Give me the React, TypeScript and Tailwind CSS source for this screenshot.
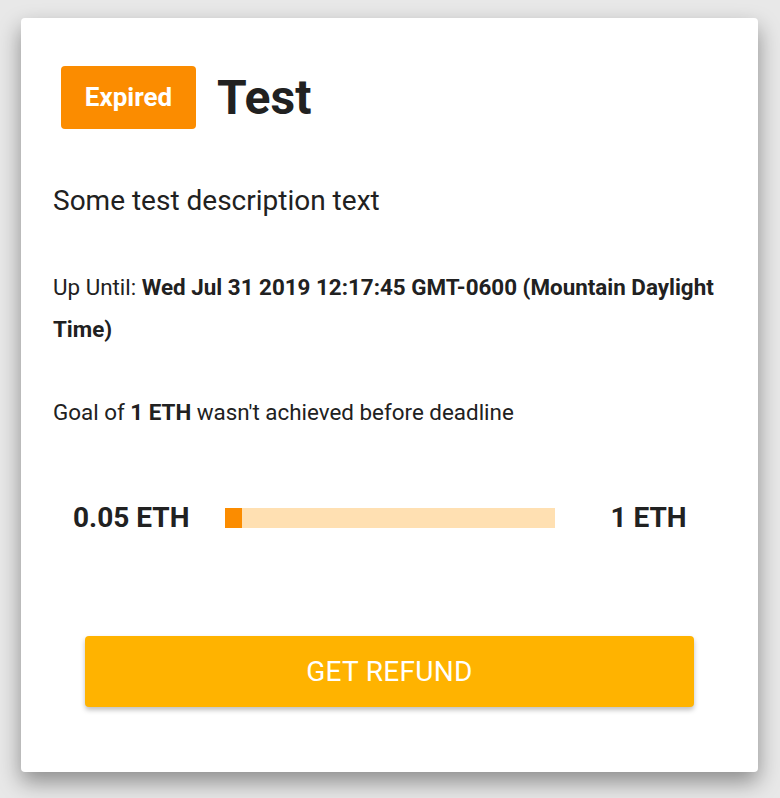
import React from 'react';

const Amount = ({ children }: { children: React.ReactNode }) => (
    <span className="text-[28px] font-bold text-[#212121] leading-8">{children}</span>
);

export default function App() {
    const raised = 0.05;
    const goal = 1;
    const pct = Math.min(100, (raised / goal) * 100);

    return (
        <div className="min-h-[798px] w-[780px] bg-[#e8e8e8] pt-[18px] pl-[21px] font-['Roboto',sans-serif] text-[#212121]">
            <div className="w-[737px] h-[754px] bg-white rounded-[4px] shadow-[0_10px_22px_rgba(0,0,0,0.4)] px-8 pt-12">
                <div className="flex items-center pl-2">
                    <span className="flex items-center justify-center w-[135px] h-[63px] rounded-[4px] bg-[#fb8c00] text-white text-[26px] font-bold">
                        Expired
                    </span>
                    <h1 className="ml-[21px] text-[48px] font-bold leading-none">Test</h1>
                </div>

                <p className="mt-[56px] text-[28px] leading-8">Some test description text</p>

                <p className="mt-[49px] text-[22.4px] leading-[42px]">
                    Up Until: <b>Wed Jul 31 2019 12:17:45 GMT-0600 (Mountain Daylight Time)</b>
                </p>

                <p className="mt-[41px] text-[22.4px] leading-[42px]">
                    Goal of <b>1 ETH</b> wasn't achieved before deadline
                </p>

                <div className="mt-[69px] flex items-center pl-5">
                    <Amount>0.05 ETH</Amount>
                    <div className="ml-[36px] w-[330px] h-5 bg-[#ffe0b2]">
                        <div className="h-full bg-[#fb8c00]" style={{ width: `${pct}%` }} />
                    </div>
                    <span className="ml-[55px]">
                        <Amount>1 ETH</Amount>
                    </span>
                </div>

                <button className="mt-[102px] mx-8 w-[609px] h-[71px] rounded-[4px] bg-[#ffb300] text-white text-[28px] font-normal tracking-[0.3px] uppercase shadow-[0_3px_5px_rgba(0,0,0,0.25)]">
                    Get Refund
                </button>
            </div>
        </div>
    );
}
